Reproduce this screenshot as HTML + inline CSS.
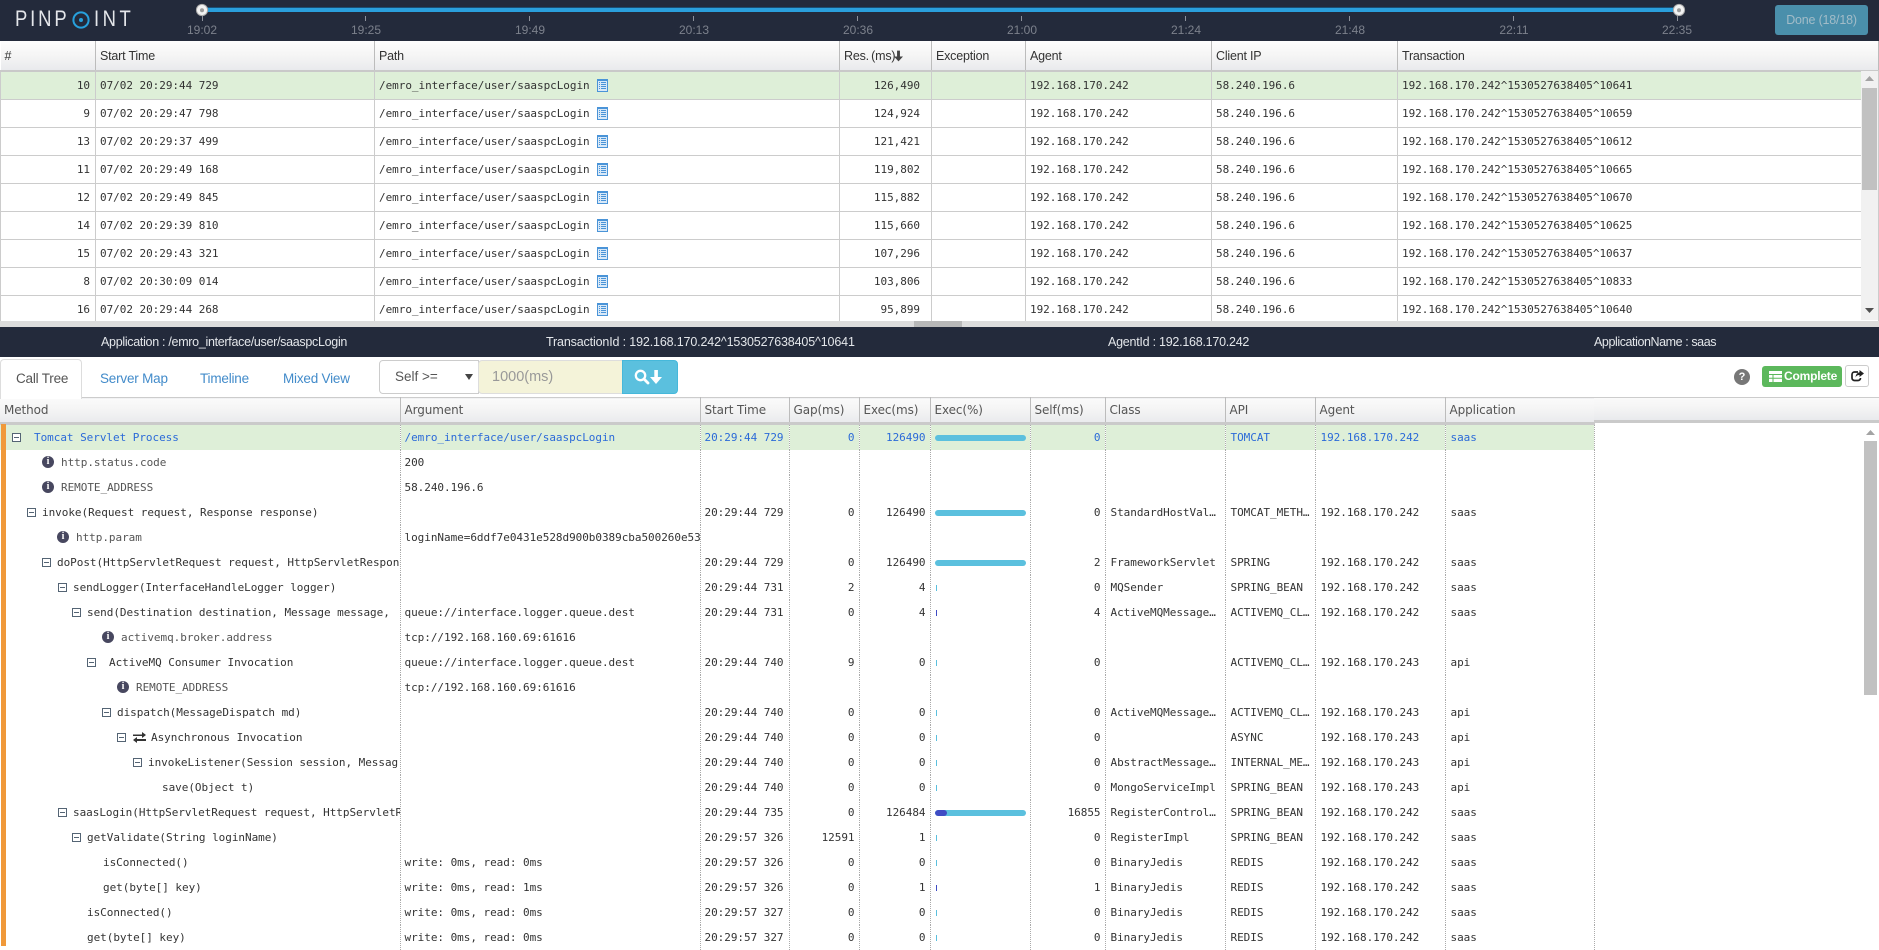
<!DOCTYPE html>
<html><head><meta charset="utf-8"><title>Pinpoint</title>
<style>
html,body{margin:0;padding:0;width:1879px;height:946px;overflow:hidden;background:#fff;font-family:"Liberation Sans",sans-serif;color:#333}
*{box-sizing:border-box}
.a{position:absolute}
#top{position:absolute;left:0;top:0;width:1879px;height:41px;background:#232a3b}
.tk{position:absolute;top:16px;width:1px;height:5px;background:#8d919b}
.tl{position:absolute;top:23px;width:60px;margin-left:-30px;text-align:center;font-size:12px;line-height:15px;color:#7c818c}
.logo{position:absolute;top:6px;font-size:22px;line-height:26px;color:#e4e6ea;letter-spacing:3.4px;transform:scaleX(.84);transform-origin:0 0}
table{border-collapse:collapse;table-layout:fixed;position:absolute}
#t1{left:0;top:41px;width:1879px}
#t1 th{height:30px;padding:0 0 0 4px;text-align:left;font-weight:normal;font-size:12.5px;color:#333;background:linear-gradient(#fdfdfd,#f5f5f5 50%,#e9eaed);border-right:1px solid #bcbcbc;border-bottom:2px solid #c9c9c9;letter-spacing:-.2px}
#t1 td{height:28px;padding:1px 0 0 4px;font:11px/14px "DejaVu Sans Mono",monospace;letter-spacing:-.04px;color:#333;border-right:1px solid #ccc;border-bottom:1px solid #ccc;white-space:nowrap;overflow:hidden}
#t1 td:first-child{border-left:1px solid #ccc;text-align:right;padding-right:5px}
#t1 td.r{text-align:right;padding-right:11px}
#t1 tr.s td{background:#deefd8}
#t1 svg{vertical-align:-3px;margin-left:7px}
#t2{left:0;top:397px;width:1594px}
#t2 th{height:26px;padding:0 0 0 4px;text-align:left;font-weight:normal;font-size:12px;font-family:"DejaVu Sans",sans-serif;color:#555;background:linear-gradient(#fafafa,#f5f5f5 40%,#e9eaed);border-top:1px solid #ccc;border-right:1px solid #bcbcbc;border-bottom:3px solid #cacaca;letter-spacing:-.1px}
#t2 td{height:25px;padding:0 0 0 4px;font:11px/14px "DejaVu Sans Mono",monospace;letter-spacing:-.04px;color:#333;border-right:1px dotted #aaa;white-space:nowrap;overflow:hidden}
#t2 td.r{text-align:right;padding:0 4px 0 0}
#t2 td.l{padding-left:5px}
#t2 td.m{padding:0}
#t2 td.b{padding:0 0 0 5px}
#t2 tr.s td{background:#deefd8;color:#2b6ad8}
.w{position:relative;height:25px;overflow:hidden}
.w span{position:absolute;top:6px;white-space:nowrap}
.w i{position:absolute;top:8px;width:9px;height:9px;border:1px solid #546474;background:#fff}
.w i:after{content:"";position:absolute;left:1px;top:3px;width:5px;height:1px;background:#546474}
.w b{position:absolute;top:6px;width:12px;height:12px;border-radius:6px;background:#47475f;color:#fff;font:bold 10px/12px "Liberation Serif",serif;text-align:center}
.w span.k{color:#555}
.bar{display:block;height:6px;width:91px;margin-left:-1px;border-radius:3px;background:#5bc0de;overflow:hidden}
.tick{display:block;height:6px;width:1px;margin-left:0;background:#5bc0de}
.tick.d{background:#3f4cc4}
.d1{position:absolute;top:335px;font-size:12.5px;line-height:14px;color:#e3e6ea;white-space:nowrap;letter-spacing:-.15px}
.tab{position:absolute;top:371px;font-size:13.5px;line-height:16px;color:#428bca;letter-spacing:-.2px}
</style></head><body>
<div id="top">
<span class="logo" style="left:15px">PINP</span>
<svg class="a" style="left:72px;top:11px" width="18" height="18" viewBox="0 0 18 18"><circle cx="9" cy="9" r="7.6" fill="none" stroke="#27a0dc" stroke-width="2"/><circle cx="9" cy="9" r="2" fill="#27a0dc"/></svg>
<span class="logo" style="left:94px;letter-spacing:4.2px">INT</span>
<div class="a" style="left:202px;top:7px;width:1476px;height:1px;background:#1a4f75"></div>
<div class="a" style="left:202px;top:8px;width:1476px;height:4px;background:#2a9fdc"></div>
<svg class="a" style="left:195px;top:3px" width="14" height="14" viewBox="0 0 14 14"><circle cx="7" cy="7" r="5.6" fill="#f2f2f2" stroke="#aaa"/><circle cx="7" cy="7.3" r="2" fill="#9a9a9a"/></svg>
<svg class="a" style="left:1672px;top:3px" width="14" height="14" viewBox="0 0 14 14"><circle cx="7" cy="7" r="5.6" fill="#f2f2f2" stroke="#aaa"/><circle cx="7" cy="7.3" r="2" fill="#9a9a9a"/></svg>
<div class="tk" style="left:202px"></div><div class="tl" style="left:202px">19:02</div>
<div class="tk" style="left:365px"></div><div class="tl" style="left:366px">19:25</div>
<div class="tk" style="left:529px"></div><div class="tl" style="left:530px">19:49</div>
<div class="tk" style="left:693px"></div><div class="tl" style="left:694px">20:13</div>
<div class="tk" style="left:857px"></div><div class="tl" style="left:858px">20:36</div>
<div class="tk" style="left:1021px"></div><div class="tl" style="left:1022px">21:00</div>
<div class="tk" style="left:1185px"></div><div class="tl" style="left:1186px">21:24</div>
<div class="tk" style="left:1349px"></div><div class="tl" style="left:1350px">21:48</div>
<div class="tk" style="left:1513px"></div><div class="tl" style="left:1514px">22:11</div>
<div class="tk" style="left:1677px"></div><div class="tl" style="left:1677px">22:35</div>
<div class="a" style="left:1775px;top:5px;width:93px;height:30px;background:#4a8fab;border-radius:3px;color:#a2bcc8;font-size:12.5px;line-height:30px;text-align:center;letter-spacing:-.2px">Done (18/18)</div>
</div>

<table id="t1"><colgroup><col style="width:95px"><col style="width:279px"><col style="width:465px"><col style="width:92px"><col style="width:94px"><col style="width:186px"><col style="width:186px"><col></colgroup>
<tr><th>#</th><th>Start Time</th><th>Path</th><th style="word-spacing:-1px">Res. (ms)</th><th>Exception</th><th>Agent</th><th>Client IP</th><th>Transaction</th></tr>
<tr class="s"><td>10</td><td>07/02 20:29:44 729</td><td>/emro_interface/user/saaspcLogin<svg width="11" height="13" viewBox="0 0 11 13"><rect x="0" y="0" width="11" height="13" fill="#4a94d8"/><rect x="1" y="2" width="9" height="10" fill="#d9e9f8"/><path d="M2 3.500h1M4 3.500h5M2 5.500h1M4 5.500h5M2 7.500h1M4 7.500h5M2 9.500h1M4 9.500h5" stroke="#4a94d8"/></svg></td><td class="r">126,490</td><td></td><td>192.168.170.242</td><td>58.240.196.6</td><td>192.168.170.242^1530527638405^10641</td></tr>
<tr><td>9</td><td>07/02 20:29:47 798</td><td>/emro_interface/user/saaspcLogin<svg width="11" height="13" viewBox="0 0 11 13"><rect x="0" y="0" width="11" height="13" fill="#4a94d8"/><rect x="1" y="2" width="9" height="10" fill="#d9e9f8"/><path d="M2 3.500h1M4 3.500h5M2 5.500h1M4 5.500h5M2 7.500h1M4 7.500h5M2 9.500h1M4 9.500h5" stroke="#4a94d8"/></svg></td><td class="r">124,924</td><td></td><td>192.168.170.242</td><td>58.240.196.6</td><td>192.168.170.242^1530527638405^10659</td></tr>
<tr><td>13</td><td>07/02 20:29:37 499</td><td>/emro_interface/user/saaspcLogin<svg width="11" height="13" viewBox="0 0 11 13"><rect x="0" y="0" width="11" height="13" fill="#4a94d8"/><rect x="1" y="2" width="9" height="10" fill="#d9e9f8"/><path d="M2 3.500h1M4 3.500h5M2 5.500h1M4 5.500h5M2 7.500h1M4 7.500h5M2 9.500h1M4 9.500h5" stroke="#4a94d8"/></svg></td><td class="r">121,421</td><td></td><td>192.168.170.242</td><td>58.240.196.6</td><td>192.168.170.242^1530527638405^10612</td></tr>
<tr><td>11</td><td>07/02 20:29:49 168</td><td>/emro_interface/user/saaspcLogin<svg width="11" height="13" viewBox="0 0 11 13"><rect x="0" y="0" width="11" height="13" fill="#4a94d8"/><rect x="1" y="2" width="9" height="10" fill="#d9e9f8"/><path d="M2 3.500h1M4 3.500h5M2 5.500h1M4 5.500h5M2 7.500h1M4 7.500h5M2 9.500h1M4 9.500h5" stroke="#4a94d8"/></svg></td><td class="r">119,802</td><td></td><td>192.168.170.242</td><td>58.240.196.6</td><td>192.168.170.242^1530527638405^10665</td></tr>
<tr><td>12</td><td>07/02 20:29:49 845</td><td>/emro_interface/user/saaspcLogin<svg width="11" height="13" viewBox="0 0 11 13"><rect x="0" y="0" width="11" height="13" fill="#4a94d8"/><rect x="1" y="2" width="9" height="10" fill="#d9e9f8"/><path d="M2 3.500h1M4 3.500h5M2 5.500h1M4 5.500h5M2 7.500h1M4 7.500h5M2 9.500h1M4 9.500h5" stroke="#4a94d8"/></svg></td><td class="r">115,882</td><td></td><td>192.168.170.242</td><td>58.240.196.6</td><td>192.168.170.242^1530527638405^10670</td></tr>
<tr><td>14</td><td>07/02 20:29:39 810</td><td>/emro_interface/user/saaspcLogin<svg width="11" height="13" viewBox="0 0 11 13"><rect x="0" y="0" width="11" height="13" fill="#4a94d8"/><rect x="1" y="2" width="9" height="10" fill="#d9e9f8"/><path d="M2 3.500h1M4 3.500h5M2 5.500h1M4 5.500h5M2 7.500h1M4 7.500h5M2 9.500h1M4 9.500h5" stroke="#4a94d8"/></svg></td><td class="r">115,660</td><td></td><td>192.168.170.242</td><td>58.240.196.6</td><td>192.168.170.242^1530527638405^10625</td></tr>
<tr><td>15</td><td>07/02 20:29:43 321</td><td>/emro_interface/user/saaspcLogin<svg width="11" height="13" viewBox="0 0 11 13"><rect x="0" y="0" width="11" height="13" fill="#4a94d8"/><rect x="1" y="2" width="9" height="10" fill="#d9e9f8"/><path d="M2 3.500h1M4 3.500h5M2 5.500h1M4 5.500h5M2 7.500h1M4 7.500h5M2 9.500h1M4 9.500h5" stroke="#4a94d8"/></svg></td><td class="r">107,296</td><td></td><td>192.168.170.242</td><td>58.240.196.6</td><td>192.168.170.242^1530527638405^10637</td></tr>
<tr><td>8</td><td>07/02 20:30:09 014</td><td>/emro_interface/user/saaspcLogin<svg width="11" height="13" viewBox="0 0 11 13"><rect x="0" y="0" width="11" height="13" fill="#4a94d8"/><rect x="1" y="2" width="9" height="10" fill="#d9e9f8"/><path d="M2 3.500h1M4 3.500h5M2 5.500h1M4 5.500h5M2 7.500h1M4 7.500h5M2 9.500h1M4 9.500h5" stroke="#4a94d8"/></svg></td><td class="r">103,806</td><td></td><td>192.168.170.242</td><td>58.240.196.6</td><td>192.168.170.242^1530527638405^10833</td></tr>
<tr><td>16</td><td>07/02 20:29:44 268</td><td>/emro_interface/user/saaspcLogin<svg width="11" height="13" viewBox="0 0 11 13"><rect x="0" y="0" width="11" height="13" fill="#4a94d8"/><rect x="1" y="2" width="9" height="10" fill="#d9e9f8"/><path d="M2 3.500h1M4 3.500h5M2 5.500h1M4 5.500h5M2 7.500h1M4 7.500h5M2 9.500h1M4 9.500h5" stroke="#4a94d8"/></svg></td><td class="r">95,899</td><td></td><td>192.168.170.242</td><td>58.240.196.6</td><td>192.168.170.242^1530527638405^10640</td></tr>
</table>
<svg class="a" style="left:894px;top:50px" width="9" height="12" viewBox="0 0 10 12"><path d="M3.400 0h3.200v6.500H10L5 12 0 6.500h3.400z" fill="#444"/></svg>
<!-- top scrollbar -->
<div class="a" style="left:1861px;top:71px;width:17px;height:249px;background:#f1f1f1"></div>
<div class="a" style="left:1862px;top:88px;width:15px;height:102px;background:#c1c1c1"></div>
<svg class="a" style="left:1865px;top:76px" width="9" height="6"><path d="M4.500 0L9 5H0z" fill="#a3a3a3"/></svg>
<svg class="a" style="left:1865px;top:308px" width="9" height="6"><path d="M0 0h9L4.500 5z" fill="#505050"/></svg>
<!-- resize bar -->
<div class="a" style="left:0;top:321px;width:1879px;height:6px;background:#dcdcdc"></div>
<div class="a" style="left:914px;top:321px;width:48px;height:6px;background:#b8b8b8"></div>
<!-- info bar -->
<div class="a" style="left:0;top:327px;width:1879px;height:30px;background:#232a3b"></div>
<div class="d1" style="left:101px;letter-spacing:-.3px">Application : /emro_interface/user/saaspcLogin</div>
<div class="d1" style="left:546px">TransactionId : 192.168.170.242^1530527638405^10641</div>
<div class="d1" style="left:1108px;letter-spacing:-.25px">AgentId : 192.168.170.242</div>
<div class="d1" style="left:1594px;letter-spacing:-.42px">ApplicationName : saas</div>
<!-- tabs -->
<div class="a" style="left:0;top:359px;width:82px;height:40px;background:#fff;border:1px solid #ddd;border-bottom:0;border-radius:4px 4px 0 0;z-index:2"></div>
<div class="tab" style="left:16px;color:#555;z-index:3">Call Tree</div>
<div class="tab" style="left:100px">Server Map</div>
<div class="tab" style="left:200px">Timeline</div>
<div class="tab" style="left:283px">Mixed View</div>
<div class="a" style="left:379px;top:360px;width:100px;height:34px;border:1px solid #ccc;border-radius:4px 0 0 4px;font-size:13.5px;line-height:32px;padding-left:15px;color:#555">Self &gt;=</div>
<svg class="a" style="left:465px;top:374px" width="8" height="6"><path d="M0 0h8L4 6z" fill="#444"/></svg>
<div class="a" style="left:478px;top:360px;width:145px;height:34px;background:#f4f3d9;border:1px solid #ddd;border-radius:4px 0 0 4px;font-size:14.5px;line-height:32px;padding-left:13px;color:#999">1000(ms)</div>
<div class="a" style="left:622px;top:360px;width:56px;height:34px;background:#5bc0de;border:1px solid #46b8da;border-radius:0 4px 4px 0"></div>
<svg class="a" style="left:634px;top:369px" width="32" height="16" viewBox="0 0 32 16"><circle cx="6.500" cy="6.500" r="4.700" fill="none" stroke="#fff" stroke-width="2.300"/><path d="M10 10l4 4" stroke="#fff" stroke-width="2.800" stroke-linecap="round"/><path d="M20.300 1h3.600v7H28l-6 7-6-7h4.300z" fill="#fff"/></svg>
<!-- right tools -->
<div class="a" style="left:1734px;top:369px;width:16px;height:16px;border-radius:8px;background:#777;color:#fff;font:bold 11px/16px 'Liberation Sans',sans-serif;text-align:center">?</div>
<div class="a" style="left:1762px;top:366px;width:80px;height:21px;background:#5cb85c;border-radius:3px;color:#fff;font-weight:bold;font-size:12px;line-height:21px;padding-left:22px;letter-spacing:-.2px">Complete</div>
<svg class="a" style="left:1769px;top:371px" width="13" height="11" viewBox="0 0 13 11"><path d="M0 0h13v11H0z" fill="#fff"/><path d="M0 3.500h13M0 7.200h13M4 3.500V11" stroke="#5cb85c"/></svg>
<div class="a" style="left:1845px;top:365px;width:24px;height:22px;background:#fff;border:1px solid #ccc;border-radius:3px"></div>
<svg class="a" style="left:1851px;top:370px" width="13" height="12" viewBox="0 0 13 12"><path d="M7 2H3.500A2.500 2.500 0 0 0 1 4.500V8a2.500 2.500 0 0 0 2.500 2.500H7A2.500 2.500 0 0 0 9.500 8" fill="none" stroke="#222" stroke-width="1.700"/><path d="M8.500 0L13 3.500 8.500 7V5Q5.500 5 4.500 7.500 4.700 3 8.500 2.200z" fill="#222"/></svg>

<!-- call tree -->
<table id="t2"><colgroup><col style="width:400px"><col style="width:300px"><col style="width:89px"><col style="width:70px"><col style="width:71px"><col style="width:100px"><col style="width:75px"><col style="width:120px"><col style="width:90px"><col style="width:130px"><col style="width:149px"></colgroup>
<tr><th>Method</th><th>Argument</th><th>Start Time</th><th>Gap(ms)</th><th>Exec(ms)</th><th>Exec(%)</th><th>Self(ms)</th><th>Class</th><th>API</th><th>Agent</th><th>Application</th></tr>
<tr class="s"><td class="m"><div class="w"><i style="left:12px"></i><span style="left:34px">Tomcat Servlet Process</span></div></td><td>/emro_interface/user/saaspcLogin</td><td>20:29:44 729</td><td class="r">0</td><td class="r">126490</td><td class="b"><span class="bar"></span></td><td class="r">0</td><td class="l"></td><td class="l">TOMCAT</td><td class="l">192.168.170.242</td><td class="l">saas</td></tr>
<tr><td class="m"><div class="w"><b style="left:42px">i</b><span class="k" style="left:61px">http.status.code</span></div></td><td>200</td><td></td><td></td><td></td><td></td><td></td><td></td><td></td><td></td><td></td></tr>
<tr><td class="m"><div class="w"><b style="left:42px">i</b><span class="k" style="left:61px">REMOTE_ADDRESS</span></div></td><td>58.240.196.6</td><td></td><td></td><td></td><td></td><td></td><td></td><td></td><td></td><td></td></tr>
<tr><td class="m"><div class="w"><i style="left:27px"></i><span style="left:42px">invoke(Request request, Response response)</span></div></td><td></td><td>20:29:44 729</td><td class="r">0</td><td class="r">126490</td><td class="b"><span class="bar"></span></td><td class="r">0</td><td class="l">StandardHostVal…</td><td class="l">TOMCAT_METH…</td><td class="l">192.168.170.242</td><td class="l">saas</td></tr>
<tr><td class="m"><div class="w"><b style="left:57px">i</b><span class="k" style="left:76px">http.param</span></div></td><td>loginName=6ddf7e0431e528d900b0389cba500260e53</td><td></td><td></td><td></td><td></td><td></td><td></td><td></td><td></td><td></td></tr>
<tr><td class="m"><div class="w"><i style="left:42px"></i><span style="left:57px">doPost(HttpServletRequest request, HttpServletRespon</span></div></td><td></td><td>20:29:44 729</td><td class="r">0</td><td class="r">126490</td><td class="b"><span class="bar"></span></td><td class="r">2</td><td class="l">FrameworkServlet</td><td class="l">SPRING</td><td class="l">192.168.170.242</td><td class="l">saas</td></tr>
<tr><td class="m"><div class="w"><i style="left:58px"></i><span style="left:73px">sendLogger(InterfaceHandleLogger logger)</span></div></td><td></td><td>20:29:44 731</td><td class="r">2</td><td class="r">4</td><td class="b"><span class="tick"></span></td><td class="r">0</td><td class="l">MQSender</td><td class="l">SPRING_BEAN</td><td class="l">192.168.170.242</td><td class="l">saas</td></tr>
<tr><td class="m"><div class="w"><i style="left:72px"></i><span style="left:87px">send(Destination destination, Message message,</span></div></td><td>queue://interface.logger.queue.dest</td><td>20:29:44 731</td><td class="r">0</td><td class="r">4</td><td class="b"><span class="tick d"></span></td><td class="r">4</td><td class="l">ActiveMQMessage…</td><td class="l">ACTIVEMQ_CL…</td><td class="l">192.168.170.242</td><td class="l">saas</td></tr>
<tr><td class="m"><div class="w"><b style="left:102px">i</b><span class="k" style="left:121px">activemq.broker.address</span></div></td><td>tcp://192.168.160.69:61616</td><td></td><td></td><td></td><td></td><td></td><td></td><td></td><td></td><td></td></tr>
<tr><td class="m"><div class="w"><i style="left:87px"></i><span style="left:109px">ActiveMQ Consumer Invocation</span></div></td><td>queue://interface.logger.queue.dest</td><td>20:29:44 740</td><td class="r">9</td><td class="r">0</td><td class="b"><span class="tick"></span></td><td class="r">0</td><td class="l"></td><td class="l">ACTIVEMQ_CL…</td><td class="l">192.168.170.243</td><td class="l">api</td></tr>
<tr><td class="m"><div class="w"><b style="left:117px">i</b><span class="k" style="left:136px">REMOTE_ADDRESS</span></div></td><td>tcp://192.168.160.69:61616</td><td></td><td></td><td></td><td></td><td></td><td></td><td></td><td></td><td></td></tr>
<tr><td class="m"><div class="w"><i style="left:102px"></i><span style="left:117px">dispatch(MessageDispatch md)</span></div></td><td></td><td>20:29:44 740</td><td class="r">0</td><td class="r">0</td><td class="b"><span class="tick"></span></td><td class="r">0</td><td class="l">ActiveMQMessage…</td><td class="l">ACTIVEMQ_CL…</td><td class="l">192.168.170.243</td><td class="l">api</td></tr>
<tr><td class="m"><div class="w"><i style="left:117px"></i><svg class="a" style="left:133px;top:7px" width="13" height="11" viewBox="0 0 13 11"><path d="M0 2.500h9V0l4 3-4 3V4H0zM13 7H4V5L0 8l4 3V9h9z" fill="#333"/></svg><span style="left:151px">Asynchronous Invocation</span></div></td><td></td><td>20:29:44 740</td><td class="r">0</td><td class="r">0</td><td class="b"><span class="tick"></span></td><td class="r">0</td><td class="l"></td><td class="l">ASYNC</td><td class="l">192.168.170.243</td><td class="l">api</td></tr>
<tr><td class="m"><div class="w"><i style="left:133px"></i><span style="left:148px">invokeListener(Session session, Messag</span></div></td><td></td><td>20:29:44 740</td><td class="r">0</td><td class="r">0</td><td class="b"><span class="tick"></span></td><td class="r">0</td><td class="l">AbstractMessage…</td><td class="l">INTERNAL_ME…</td><td class="l">192.168.170.243</td><td class="l">api</td></tr>
<tr><td class="m"><div class="w"><span style="left:162px">save(Object t)</span></div></td><td></td><td>20:29:44 740</td><td class="r">0</td><td class="r">0</td><td class="b"><span class="tick"></span></td><td class="r">0</td><td class="l">MongoServiceImpl</td><td class="l">SPRING_BEAN</td><td class="l">192.168.170.243</td><td class="l">api</td></tr>
<tr><td class="m"><div class="w"><i style="left:58px"></i><span style="left:73px">saasLogin(HttpServletRequest request, HttpServletR</span></div></td><td></td><td>20:29:44 735</td><td class="r">0</td><td class="r">126484</td><td class="b"><span class="bar"><span style="display:block;width:12px;height:6px;border-radius:3px;background:#3f4cc4"></span></span></td><td class="r">16855</td><td class="l">RegisterControl…</td><td class="l">SPRING_BEAN</td><td class="l">192.168.170.242</td><td class="l">saas</td></tr>
<tr><td class="m"><div class="w"><i style="left:72px"></i><span style="left:87px">getValidate(String loginName)</span></div></td><td></td><td>20:29:57 326</td><td class="r">12591</td><td class="r">1</td><td class="b"><span class="tick"></span></td><td class="r">0</td><td class="l">RegisterImpl</td><td class="l">SPRING_BEAN</td><td class="l">192.168.170.242</td><td class="l">saas</td></tr>
<tr><td class="m"><div class="w"><span style="left:103px">isConnected()</span></div></td><td>write: 0ms, read: 0ms</td><td>20:29:57 326</td><td class="r">0</td><td class="r">0</td><td class="b"><span class="tick"></span></td><td class="r">0</td><td class="l">BinaryJedis</td><td class="l">REDIS</td><td class="l">192.168.170.242</td><td class="l">saas</td></tr>
<tr><td class="m"><div class="w"><span style="left:103px">get(byte[] key)</span></div></td><td>write: 0ms, read: 1ms</td><td>20:29:57 326</td><td class="r">0</td><td class="r">1</td><td class="b"><span class="tick d"></span></td><td class="r">1</td><td class="l">BinaryJedis</td><td class="l">REDIS</td><td class="l">192.168.170.242</td><td class="l">saas</td></tr>
<tr><td class="m"><div class="w"><span style="left:87px">isConnected()</span></div></td><td>write: 0ms, read: 0ms</td><td>20:29:57 327</td><td class="r">0</td><td class="r">0</td><td class="b"><span class="tick"></span></td><td class="r">0</td><td class="l">BinaryJedis</td><td class="l">REDIS</td><td class="l">192.168.170.242</td><td class="l">saas</td></tr>
<tr><td class="m"><div class="w"><span style="left:87px">get(byte[] key)</span></div></td><td>write: 0ms, read: 0ms</td><td>20:29:57 327</td><td class="r">0</td><td class="r">0</td><td class="b"><span class="tick"></span></td><td class="r">0</td><td class="l">BinaryJedis</td><td class="l">REDIS</td><td class="l">192.168.170.242</td><td class="l">saas</td></tr>
</table>
<!-- header filler -->
<div class="a" style="left:1594px;top:397px;width:285px;height:26px;background:linear-gradient(#fafafa,#f5f5f5 40%,#e9eaed);border-top:1px solid #ccc;border-bottom:3px solid #cacaca"></div>
<!-- orange bar -->
<div class="a" style="left:1px;top:424px;width:5px;height:522px;background:#f0993a"></div>
<!-- lower scrollbar -->
<svg class="a" style="left:1866px;top:430px" width="9" height="6"><path d="M4.500 0L9 5H0z" fill="#a3a3a3"/></svg>
<div class="a" style="left:1864px;top:441px;width:13px;height:254px;background:#c1c1c1"></div>
</body></html>
